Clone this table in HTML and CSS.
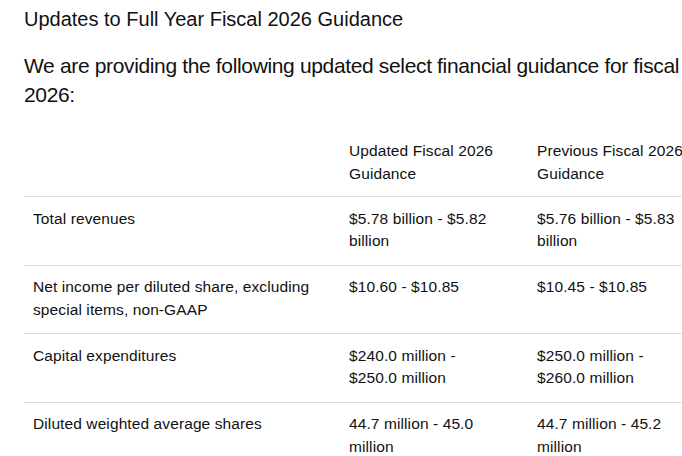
FILE: index.html
```html
<!DOCTYPE html>
<html lang="en">
<head>
<meta charset="utf-8">
<title>Fiscal 2026 Guidance</title>
<link rel="stylesheet" href="styles.css">
</head>
<body>
<main class="content">
  <h3 class="section-title">Updates to Full Year Fiscal 2026 Guidance</h3>
  <p class="intro">We are providing the following updated select financial guidance for fiscal 2026:</p>
  <table class="guidance">
    <colgroup>
      <col class="col-label">
      <col class="col-value">
      <col class="col-value">
    </colgroup>
    <thead>
      <tr>
        <th></th>
        <th>Updated Fiscal 2026 Guidance</th>
        <th>Previous Fiscal 2026 Guidance</th>
      </tr>
    </thead>
    <tbody>
      <tr>
        <td>Total revenues</td>
        <td>$5.78 billion - $5.82 billion</td>
        <td>$5.76 billion - $5.83 billion</td>
      </tr>
      <tr>
        <td>Net income per diluted share, excluding special items, non-GAAP</td>
        <td>$10.60 - $10.85</td>
        <td>$10.45 - $10.85</td>
      </tr>
      <tr>
        <td>Capital expenditures</td>
        <td>$240.0 million - $250.0 million</td>
        <td>$250.0 million - $260.0 million</td>
      </tr>
      <tr>
        <td>Diluted weighted average shares</td>
        <td>44.7 million - 45.0 million</td>
        <td>44.7 million - 45.2 million</td>
      </tr>
    </tbody>
  </table>
</main>
</body>
</html>
```

FILE: styles.css
```css
html, body {
  margin: 0;
  padding: 0;
  background: #ffffff;
  overflow: hidden;
}

body {
  font-family: "Liberation Sans", Arial, Helvetica, sans-serif;
  color: #111111;
}

.content {
  width: 691px;
  padding: 5px 0 0 24px;
}

.section-title {
  margin: 0 0 18px 0;
  font-size: 20px;
  font-weight: normal;
  line-height: 28px;
}

.intro {
  margin: 0 0 20px 0;
  font-size: 21px;
  line-height: 29px;
  letter-spacing: -0.35px;
}

.guidance {
  width: 691px;
  table-layout: fixed;
  border-collapse: collapse;
  font-size: 15.5px;
  line-height: 22.5px;
  letter-spacing: 0.1px;
}

.col-label {
  width: 315px;
}

.col-value {
  width: 188px;
}

.guidance th,
.guidance td {
  text-align: left;
  vertical-align: top;
  font-weight: normal;
  padding: 10.5px 28px 12px 9px;
}

.guidance th {
  padding-top: 11px;
  padding-bottom: 11px;
}

.guidance th + th,
.guidance td + td {
  padding-left: 10px;
}

.guidance tbody tr {
  border-top: 1px solid #dddddd;
}
```
